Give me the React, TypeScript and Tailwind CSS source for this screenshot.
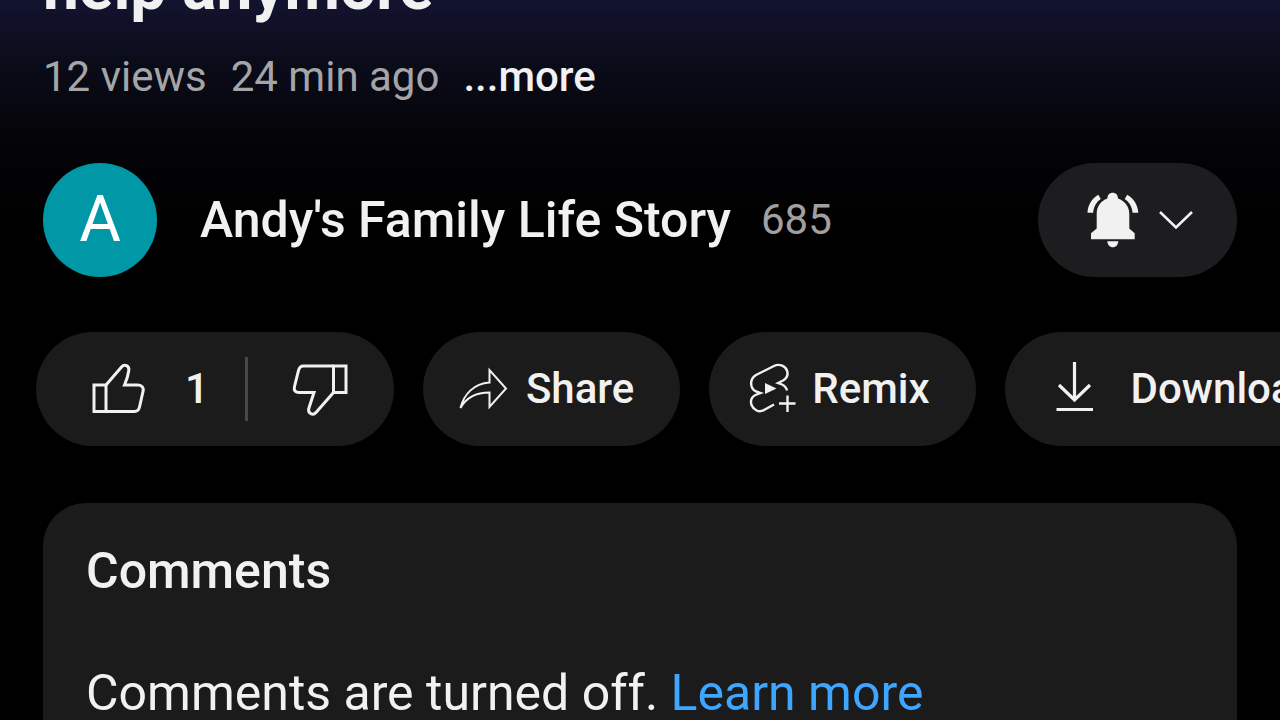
import React from 'react';

interface IconProps {
  className?: string;
}

const ThumbUpIcon: React.FC<IconProps> = ({ className = '' }) => (
  <svg viewBox="0 -1 60 60" fill="none" stroke="currentColor" strokeWidth="3" aria-hidden="true" className={`w-[60px] h-[60px] shrink-0 ${className}`}>
    <path d="M4 25H16V51.5H4Z" />
    <path d="M16 25L31.5 7C34.5 3.5 39.5 5.5 38.8 10.5C38 16 36.5 20.5 34.5 25H48C52 25 54 28 53 31.5L49.5 47C48.8 50 47.5 51.5 44.5 51.5H16" />
  </svg>
);

const ThumbDownIcon: React.FC<IconProps> = ({ className = '' }) => (
  <svg viewBox="0 -1 60 60" fill="none" stroke="currentColor" strokeWidth="3" aria-hidden="true" className={`w-[60px] h-[60px] shrink-0 ${className}`}>
    <path d="M42.5 6H55V32.5H42.5Z" />
    <path d="M42.5 6H12.5C9.5 6 8.2 7.5 7.5 10.5L3.5 26.5C2.5 30.5 4.5 32.5 8 32.5H23L17.8 48.5C16.5 53.5 22 56 25 52.5L42.5 32.5" />
  </svg>
);

const ShareIcon: React.FC<IconProps> = ({ className = '' }) => (
  <svg viewBox="0 -1 52 60" fill="none" stroke="currentColor" strokeWidth="2" aria-hidden="true" className={`w-[52px] h-[60px] shrink-0 ${className}`}>
    <path d="M2.5 48C6 34 16 23.5 31.5 22.5V10L48 28.5L31.5 47V32.5C18 32.5 8.5 37 2.5 48Z" />
  </svg>
);

const RemixIcon: React.FC<IconProps> = ({ className = '' }) => (
  <svg viewBox="0 -1 50 60" fill="none" stroke="currentColor" strokeWidth="2.4" aria-hidden="true" className={`w-[50px] h-[60px] shrink-0 ${className}`}>
    <path d="M25 44.5L15 50C10 53 4.5 50 2.5 45C1 40 2.5 37 6.5 35L11.5 33L7 31.5C0.5 28 0.5 19 7 15L25 6C30 3.5 36 5.5 38 10.5C39.5 15 37.5 18.5 34 20.5L29 23L33 24.5C36 26 37.5 28 38 30.5" />
    <path d="M16 23V34L27.5 28.5Z" fill="currentColor" stroke="none" />
    <path d="M38.5 35.5V52M30 43.5H46.5" />
  </svg>
);

const DownloadIcon: React.FC<IconProps> = ({ className = '' }) => (
  <svg viewBox="0 -1 40 60" fill="none" stroke="currentColor" strokeWidth="3.2" aria-hidden="true" className={`w-[40px] h-[60px] shrink-0 ${className}`}>
    <path d="M19.5 2V40M4 25L19.5 40L35 25" />
    <path d="M1.5 49.5H38" />
  </svg>
);

const BellIcon: React.FC<IconProps> = ({ className = '' }) => (
  <svg viewBox="0 0 54 60" fill="currentColor" aria-hidden="true" className={`w-[54px] h-[60px] shrink-0 ${className}`}>
    <path d="M26.7 2.7C29.7 2.7 32 4.8 32 8.5C39 11 43.3 16.5 43.3 24V38.5L48.7 43.3V49.3H5V43.3L10.7 38.5V24C10.7 16.5 14.5 11 21.4 8.5C21.4 4.8 23.7 2.7 26.7 2.7Z" />
    <path d="M21.3 51.3H32.3C32 55 30 57.3 26.8 57.3C23.7 57.3 21.6 55 21.3 51.3Z" />
    <path d="M1.5 22.7C1.7 15 6 8.5 12.3 4.7L14.8 9C10.3 12 7.5 17 7.2 22.7Z" />
    <path d="M52.3 22.7C52 15 47.7 8.5 41.2 4.7L38.7 9C43.2 12 46.3 17 46.5 22.7Z" />
  </svg>
);

const ChevronIcon: React.FC<IconProps> = ({ className = '' }) => (
  <svg viewBox="0 0 36 20" fill="none" stroke="currentColor" strokeWidth="2.6" aria-hidden="true" className={`w-[36px] h-[20px] shrink-0 ${className}`}>
    <path d="M2 2L18 17.5L34 2" />
  </svg>
);

interface ActionButtonProps {
  label: string;
  icon: React.ReactNode;
  className?: string;
}

const ActionButton: React.FC<ActionButtonProps> = ({ label, icon, className = '' }) => (
  <button
    type="button"
    className={`flex h-[114px] shrink-0 items-center rounded-full bg-[#1b1b1b] pr-[46px] text-[42px] leading-[58px] font-medium ${className}`}
  >
    {icon}
    {label}
  </button>
);

const App: React.FC = () => {
  return (
    <main className="h-screen overflow-hidden bg-black bg-[linear-gradient(to_bottom,#12132f_0px,#0d0e1f_45px,#080913_90px,#040408_140px,#000000_230px)] font-[Roboto,sans-serif] text-[#f1f1f1]">
      <div className="flex h-[24px] items-end overflow-hidden px-[43px]">
        <h1 className="text-[64px] leading-[72px] font-bold whitespace-nowrap">help anymore</h1>
      </div>

      <div className="mt-[24px] flex gap-6 px-[43px] text-[42px] leading-[58px] whitespace-nowrap text-[#a5a5a8]">
        <span>12 views</span>
        <span>24 min ago</span>
        <button type="button" className="font-medium text-[#f1f1f1]">...more</button>
      </div>

      <div className="mt-[57px] flex items-center px-[43px]">
        <div className="flex h-[114px] w-[114px] shrink-0 items-center justify-center rounded-full bg-[#0097a7] text-[64px] leading-[72px] text-white">
          A
        </div>
        <h2 className="ml-[43px] text-[50px] leading-[64px] font-medium whitespace-nowrap">Andy's Family Life Story</h2>
        <span className="ml-[30px] text-[42px] leading-[58px] text-[#a0a0a0]">685</span>
        <button
          type="button"
          aria-label="Notification settings"
          className="ml-auto flex h-[114px] items-center gap-[18px] rounded-full bg-[#1d1d20] pr-[43px] pl-[48px]"
        >
          <BellIcon />
          <ChevronIcon />
        </button>
      </div>

      <div className="mt-[55px] flex gap-[29px] overflow-hidden pl-[36px]">
        <div className="flex h-[114px] shrink-0 items-center rounded-full bg-[#1b1b1b]">
          <button type="button" aria-label="Like" className="flex h-full items-center pr-[36px] pl-[54px] text-[42px] leading-[58px] font-medium">
            <ThumbUpIcon className="mr-[35px]" />
            1
          </button>
          <div className="h-[64px] w-[3px] bg-[#484848]" />
          <button type="button" aria-label="Dislike" className="flex h-full items-center pr-[43px] pl-[43px]">
            <ThumbDownIcon />
          </button>
        </div>
        <ActionButton label="Share" icon={<ShareIcon className="mr-[16px]" />} className="pl-[35px]" />
        <ActionButton label="Remix" icon={<RemixIcon className="mr-[13px]" />} className="pl-[40px]" />
        <ActionButton label="Download" icon={<DownloadIcon className="mr-[36px]" />} className="pl-[50px]" />
      </div>

      <section className="mx-[43px] mt-[57px] rounded-[43px] bg-[#1b1b1b] px-[43px] pt-[36px] pb-[43px]">
        <h2 className="text-[50px] leading-[64px] font-medium">Comments</h2>
        <p className="mt-[58px] text-[50px] leading-[64px]">
          Comments are turned off. <a href="#" className="text-[#3ea6ff]">Learn more</a>
        </p>
      </section>
    </main>
  );
};

export default App;
